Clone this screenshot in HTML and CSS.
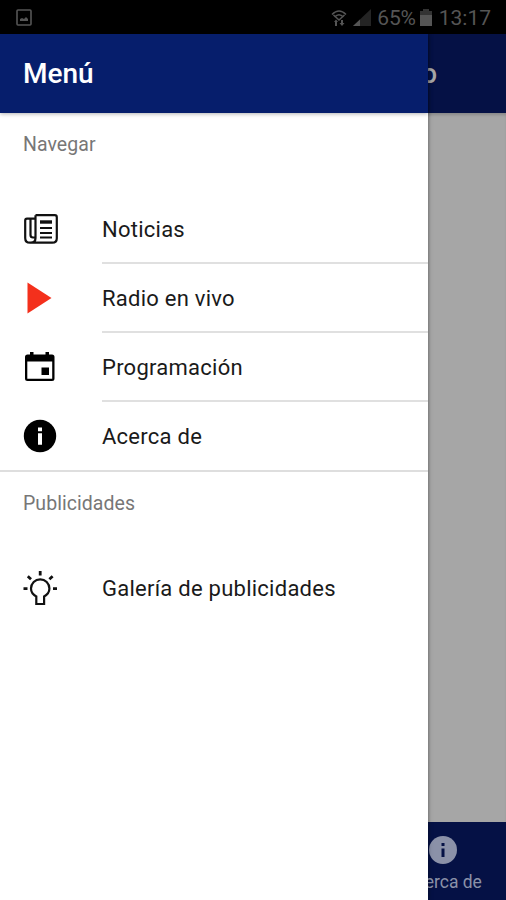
FILE: index.html
```html
<!DOCTYPE html>
<html lang="es">
<head>
<meta charset="utf-8">
<title>Menú</title>
<link rel="stylesheet" href="styles.css">
</head>
<body>
<div class="screen">
  <header class="status">
    <svg class="status-picture" width="16" height="17" viewBox="0 0 16 17"><rect x="1" y="1" width="14" height="15" rx="1" fill="none" stroke="currentColor" stroke-width="1.6"/><path d="M4 12V10l2-1 2 1 2-2 2 2v2z" fill="currentColor"/></svg>
    <div class="status-right">
      <svg class="wifi" width="16" height="18" viewBox="0 0 16 18"><path d="M1 5.500Q8-1.500 15 5.500M3.500 8Q8 3.500 12.500 8M2.500 6L8 11l5.500-5" fill="none" stroke="currentColor" stroke-width="1.500"/><path d="M5 10.500L7 13H6v4H4v-4H3zM10 11h2v3h1.500L11 17l-2.500-3H10z" fill="currentColor"/></svg>
      <svg class="signal" width="18" height="17" viewBox="0 0 18 17"><path d="M0 17L18 0v17z" fill="#242424"/><path d="M0 17l7-6.600V17z" fill="currentColor"/></svg>
      <span class="percent">65%</span>
      <svg class="battery" width="12" height="17" viewBox="0 0 12 17"><path d="M3 0h6v2h3v15H0V2h3z" fill="#333"/><path d="M0 6h12v11H0z" fill="currentColor"/></svg>
      <span class="time">13:17</span>
    </div>
  </header>
  <main class="app">
    <section class="page">
      <div class="page-bar"><span>Inicio</span></div>
      <div class="page-content"></div>
      <nav class="tabs">
        <div class="tab">
          <svg width="28" height="28" viewBox="0 0 28 28"><circle cx="14" cy="14" r="14" fill="currentColor"/><path d="M12.500 7h3v3h-3zM12.500 12.500h3V21h-3z" fill="#051145"/></svg>
          <span>Acerca de</span>
        </div>
      </nav>
    </section>
    <aside class="drawer">
      <h1 class="drawer-title">Menú</h1>
      <section class="group">
        <h2 class="group-title">Navegar</h2>
        <ul class="list">
          <li class="item"><svg class="icon" viewBox="0 0 36 36" fill="none" stroke="#111" stroke-width="2.200"><path d="M12.500 4.200h19.300q2 0 2 2v21q0 4.500-4.500 4.500H7q-4.800 0-4.800-4.800V9.500q0-1.800 1.800-1.800h8.500M7.500 7.700V24q0 2.500 2.500 2.500h2.500M12.500 4.200V27q0 4.700-4.700 4.700"/><path d="M17 11h12" stroke-width="3.400"/><path d="M17 17h12M17 22h12M17 26.500h12" stroke-width="1.900"/></svg><span class="label">Noticias</span></li>
          <li class="item"><svg class="icon" viewBox="0 0 36 36"><path d="M4.500 2.500L28.500 18 4.500 33.500z" fill="#f4301c"/></svg><span class="label">Radio en vivo</span></li>
          <li class="item"><svg class="icon" viewBox="0 0 36 36"><path fill-rule="evenodd" d="M7 3h3.500v2.500h12V3H26v2.500h3q2.500 0 2.500 2.500v21.500q0 2.500-2.500 2.500H4.500Q2 32 2 29.500V8q0-2.500 2.500-2.500H7zM4.300 12.500v17.200h24.900V12.500zM18.500 18.500h7.500v7.500h-7.500z" fill="#000"/></svg><span class="label">Programación</span></li>
          <li class="item last"><svg class="icon" viewBox="0 0 36 36"><circle cx="17" cy="18" r="16.200" fill="#000"/><path d="M15 9.500h4v3.700h-4zM15 15.300h4V26.700h-4z" fill="#fff"/></svg><span class="label">Acerca de</span></li>
        </ul>
      </section>
      <section class="group">
        <h2 class="group-title">Publicidades</h2>
        <ul class="list">
          <li class="item last"><svg class="icon" viewBox="0 0 36 36" fill="none" stroke="#111" stroke-width="2.200"><path d="M13.300 34V26.500Q8 23.500 8 18.500a9.200 9.200 0 0 1 18.400 0q0 5-5.300 8V34z"/><path d="M17.200 1v4.500M4.800 6.200L8 9.200M29.600 6.200L26.400 9.200M.5 18.700h4M30 18.700h4" stroke-width="2.800"/></svg><span class="label">Galería de publicidades</span></li>
        </ul>
      </section>
    </aside>
  </main>
</div>
</body>
</html>
```
FILE: styles.css
```css
* { box-sizing: border-box; }
body { margin: 0; font-family: Roboto, "Liberation Sans", sans-serif; }
.screen { width: 506px; height: 900px; display: flex; flex-direction: column; overflow: hidden; background: #000; }
.status { height: 34px; flex: none; display: flex; align-items: center; justify-content: space-between; padding: 1px 15px 0 16px; color: #555; }
.status-right { display: flex; align-items: center; font-size: 21px; }
.signal { margin-left: 6px; }
.percent { margin-left: 6px; letter-spacing: -0.2px; }
.battery { margin-left: 4px; }
.time { margin-left: 7px; }
.app { position: relative; flex: 1; min-height: 0; }
.page { height: 100%; display: flex; flex-direction: column; }
.page-bar { height: 79px; flex: none; display: flex; align-items: center; justify-content: flex-end; padding-right: 69px; background: #051145; color: #a6a6a6; font-size: 27px; font-weight: 500; }
.page-content { flex: 1; background: #a6a6a6; box-shadow: inset 0 3px 3px -1px #888; }
.tabs { height: 78px; flex: none; display: flex; justify-content: flex-end; background: #051145; padding-right: 25px; }
.tab { display: flex; flex-direction: column; align-items: center; width: 76px; padding-top: 14px; gap: 8px; color: #8b91a8; font-size: 17.500px; line-height: 20px; white-space: nowrap; }
.drawer { position: absolute; inset: 0 auto 0 0; width: 428px; background: #fff; box-shadow: 0 0 4px rgba(0, 0, 0, .5); }
.drawer-title { margin: 0; height: 79px; padding-left: 23px; display: flex; align-items: center; background: #061e6c; color: #fff; font-size: 28px; font-weight: 500; box-shadow: 0 1px 4px rgba(0, 0, 0, .3); }
.group-title { margin: 0; height: 82px; padding: 19px 0 0 23px; color: #777; font-size: 19.500px; line-height: 26px; font-weight: 400; letter-spacing: .05px; }
.group + .group .group-title { height: 81px; }
.list { margin: 0; padding: 0; list-style: none; }
.item { height: 69px; display: flex; align-items: center; padding-left: 23px; gap: 43px; }
.icon { width: 36px; height: 36px; flex: none; margin-top: -2px; }
.label { flex: 1; height: 100%; display: flex; align-items: center; padding-top: 2px; border-bottom: 2px solid #e0e0e0; color: #1a1a1a; font-size: 22px; letter-spacing: .25px; }
.last { height: 70px; }
.last .icon { margin-top: 0; }
.last .label { border: 0; padding-top: 0; }
.group:first-of-type .last { border-bottom: 2px solid #dedede; }
```
